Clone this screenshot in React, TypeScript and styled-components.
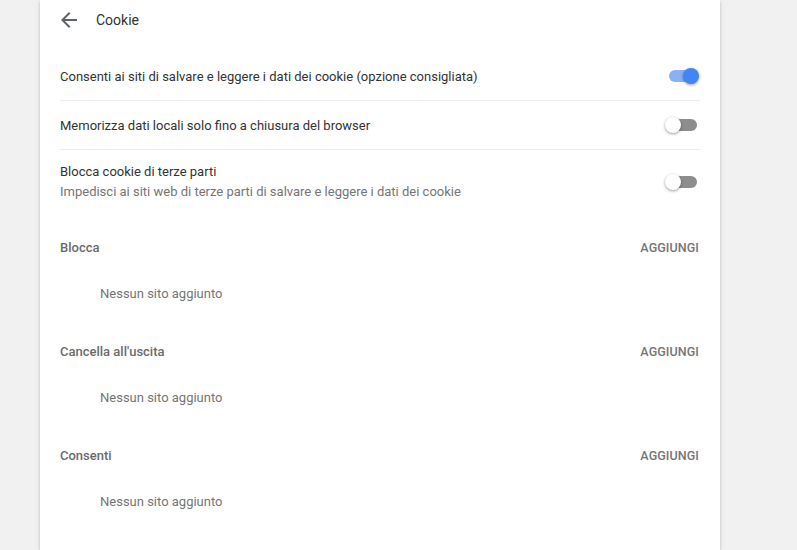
import React from "react";
import styled, { createGlobalStyle } from "styled-components";

const GlobalStyle = createGlobalStyle`
  html, body {
    margin: 0;
    padding: 0;
    background: #f1f1f1;
    overflow: hidden;
    font-family: Roboto, "Liberation Sans", Arial, sans-serif;
    font-size: 13px;
    -webkit-font-smoothing: antialiased;
  }
`;

const Page = styled.div`
  height: 550px;
  padding-left: 40px;
  overflow: hidden;
`;

const Card = styled.div`
  width: 680px;
  height: 100%;
  background: #fff;
  box-shadow: 0 2px 2px 0 rgba(0, 0, 0, 0.14), 0 1px 5px 0 rgba(0, 0, 0, 0.12),
    0 3px 1px -2px rgba(0, 0, 0, 0.2);
`;

const Header = styled.div`
  display: flex;
  align-items: center;
  height: 40px;
  padding-left: 17px;
  gap: 15px;
`;

const BackButton = styled.button`
  display: flex;
  align-items: center;
  justify-content: center;
  width: 24px;
  height: 24px;
  padding: 0;
  border: none;
  background: none;
  color: #5f6368;
  cursor: pointer;
`;

const Title = styled.h1`
  margin: 0;
  font-size: 14px;
  font-weight: 400;
  color: #333;
`;

const Rows = styled.div`
  margin-top: 12px;
  padding: 0 20px;
`;

const Row = styled.div<{ $tall?: boolean }>`
  display: flex;
  align-items: center;
  justify-content: space-between;
  min-height: ${({ $tall }) => ($tall ? "64px" : "48px")};
  & + & {
    border-top: 1px solid #ececec;
  }
`;

const RowText = styled.div`
  display: flex;
  flex-direction: column;
  line-height: 20px;
`;

const Primary = styled.span`
  color: #333;
`;

const Secondary = styled.span`
  color: #757575;
`;

const Toggle = styled.div`
  position: relative;
  width: 34px;
  height: 16px;
  margin-right: 1px;
  flex-shrink: 0;
`;

const Track = styled.span<{ $on?: boolean }>`
  position: absolute;
  left: 4px;
  right: 2px;
  top: 2px;
  height: 12px;
  border-radius: 6px;
  background: ${({ $on }) => ($on ? "#8ab1f5" : "#8d8d8d")};
`;

const Knob = styled.span<{ $on?: boolean }>`
  position: absolute;
  top: 0;
  left: ${({ $on }) => ($on ? "18px" : "0")};
  width: 16px;
  height: 16px;
  border-radius: 50%;
  background: ${({ $on }) => ($on ? "#4285f4" : "#fff")};
  box-shadow: 0 1px 3px 0 rgba(0, 0, 0, 0.4);
`;

const Sections = styled.div`
  padding: 9px 20px 0;
`;

const Section = styled.section`
  padding-bottom: 12px;
`;

const SectionHead = styled.div`
  display: flex;
  align-items: center;
  justify-content: space-between;
  height: 48px;
`;

const SectionTitle = styled.h2`
  margin: 0;
  font-size: 13px;
  font-weight: 500;
  color: #6b6b6b;
`;

const AddButton = styled.button`
  padding: 0;
  margin-right: 1px;
  border: none;
  background: none;
  font-family: inherit;
  font-size: 12.5px;
  font-weight: 500;
  color: #757575;
  text-transform: uppercase;
  letter-spacing: 0.1px;
  cursor: pointer;
`;

const EmptyItem = styled.div`
  display: flex;
  align-items: center;
  height: 44px;
  padding-left: 40px;
  color: #757575;
`;

const Switch = ({ on }: { on?: boolean }) => (
  <Toggle>
    <Track $on={on} />
    <Knob $on={on} />
  </Toggle>
);

const sections = ["Blocca", "Cancella all'uscita", "Consenti"];

export default function App() {
  return (
    <>
      <GlobalStyle />
      <Page>
        <Card>
          <Header>
            <BackButton aria-label="Indietro">
              <svg width="24" height="24" viewBox="0 0 24 24" fill="currentColor">
                <path d="M20 11H7.83l5.59-5.59L12 4l-8 8 8 8 1.41-1.41L7.83 13H20v-2z" />
              </svg>
            </BackButton>
            <Title>Cookie</Title>
          </Header>
          <Rows>
            <Row>
              <Primary>
                Consenti ai siti di salvare e leggere i dati dei cookie (opzione consigliata)
              </Primary>
              <Switch on />
            </Row>
            <Row>
              <Primary>Memorizza dati locali solo fino a chiusura del browser</Primary>
              <Switch />
            </Row>
            <Row $tall>
              <RowText>
                <Primary>Blocca cookie di terze parti</Primary>
                <Secondary>
                  Impedisci ai siti web di terze parti di salvare e leggere i dati dei cookie
                </Secondary>
              </RowText>
              <Switch />
            </Row>
          </Rows>
          <Sections>
            {sections.map((name) => (
              <Section key={name}>
                <SectionHead>
                  <SectionTitle>{name}</SectionTitle>
                  <AddButton>Aggiungi</AddButton>
                </SectionHead>
                <EmptyItem>Nessun sito aggiunto</EmptyItem>
              </Section>
            ))}
          </Sections>
        </Card>
      </Page>
    </>
  );
}
